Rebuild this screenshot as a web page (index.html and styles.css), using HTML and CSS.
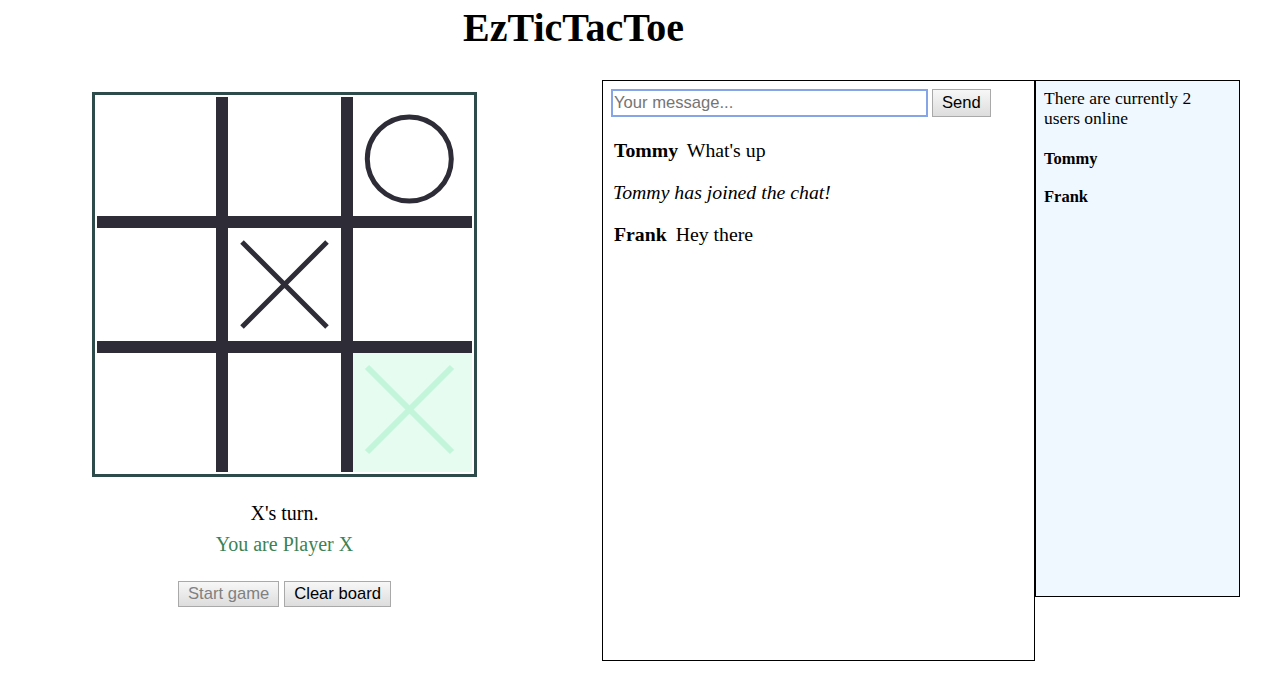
FILE: index.html
```html
<!DOCTYPE html>
<html>
<head>
<meta charset="utf-8">
<title>EzTicTacToe</title>
<link rel="stylesheet" href="styles.css">
</head>
<body>
<h1 class="title">EzTicTacToe</h1>
<div class="main">
  <div class="game">
    <div class="board">
      <div class="grid">
        <div class="cell"></div>
        <div class="cell"></div>
        <div class="cell">
          <svg width="119" height="119" viewBox="0 0 119 119"><circle cx="56.3" cy="62" r="42" fill="none" stroke="#2e2d37" stroke-width="5"/></svg>
        </div>
        <div class="cell"></div>
        <div class="cell">
          <svg width="113" height="113" viewBox="0 0 113 113"><path d="M14 14 L99 99 M99 14 L14 99" stroke="#2e2d37" stroke-width="5"/></svg>
        </div>
        <div class="cell"></div>
        <div class="cell"></div>
        <div class="cell"></div>
        <div class="cell hover">
          <svg width="119" height="119" viewBox="0 0 119 119"><path d="M14 14 L99 99 M99 14 L14 99" stroke="#c2f5da" stroke-width="6"/></svg>
        </div>
      </div>
    </div>
    <p class="turn">X's turn.</p>
    <p class="player">You are Player X</p>
    <div class="controls">
      <button class="btn" disabled>Start game</button>
      <button class="btn">Clear board</button>
    </div>
  </div>
  <div class="chat">
    <form class="chat-form">
      <input class="chat-input" type="text" placeholder="Your message...">
      <button class="btn" type="button">Send</button>
    </form>
    <div class="messages">
      <p class="msg"><b class="name">Tommy</b> What's up</p>
      <p class="msg info">Tommy has joined the chat!</p>
      <p class="msg"><b class="name">Frank</b> Hey there</p>
    </div>
  </div>
  <div class="users">
    <p class="users-count">There are currently 2 users online</p>
    <p class="user">Tommy</p>
    <p class="user">Frank</p>
  </div>
</div>
</body>
</html>
```
FILE: styles.css
```css
body {
  margin: 0 8px 8px;
  font-family: "Liberation Serif", "Times New Roman", serif;
  color: #000;
  background: #fff;
}

.title {
  margin: 6px 0 30px;
  padding-right: 118px;
  font-size: 40px;
  font-weight: bold;
  text-align: center;
  line-height: 44px;
}

.main {
  display: flex;
  align-items: flex-start;
}

.game {
  width: 553px;
  padding-top: 12px;
  text-align: center;
}

.board {
  display: inline-block;
  border: 3px solid #2e4b4b;
  padding: 2px;
  vertical-align: top;
}

.grid {
  display: grid;
  grid-template-columns: 119px 113px 119px;
  grid-template-rows: 119px 113px 119px;
  gap: 12px;
  background: #2e2d37;
}

.cell {
  background: #fff;
  overflow: hidden;
}

.cell svg {
  display: block;
}

.cell.hover {
  background: #e6fcf0;
}

.turn {
  margin: 25px 0 0;
  font-size: 20px;
  line-height: 23px;
}

.player {
  margin: 8px 0 0;
  font-size: 20px;
  line-height: 23px;
  color: #3b8256;
}

.controls {
  margin-top: 25px;
  display: flex;
  justify-content: center;
  gap: 5px;
}

.btn {
  height: 26px;
  padding: 0 9px;
  font-family: "Liberation Sans", Arial, sans-serif;
  font-size: 16.6px;
  color: #000;
  border: 1px solid #a9a9a9;
  border-radius: 0;
  background: linear-gradient(#f7f7f7, #dddddd);
}

.btn:disabled {
  color: #808080;
}

.chat {
  box-sizing: border-box;
  width: 433px;
  height: 581px;
  margin-left: 41px;
  border: 1px solid #000;
  padding: 8px;
}

.chat-form {
  display: flex;
  gap: 4px;
  margin: 0;
}

.chat-form .btn {
  height: 28px;
}

.chat-input {
  box-sizing: border-box;
  width: 317px;
  height: 28px;
  padding: 0 1px;
  border: 2px solid #84a5e8;
  outline: none;
  font-family: "Liberation Sans", Arial, sans-serif;
  font-size: 16.6px;
}

.chat-input::placeholder {
  color: #757575;
}

.messages {
  display: flex;
  flex-direction: column;
  gap: 19.5px;
  margin-top: 22px;
  padding-left: 3px;
}

.msg {
  margin: 0;
  font-size: 19.8px;
  line-height: 22.5px;
}

.msg .name {
  margin-right: 4px;
}

.msg.info {
  font-style: italic;
  margin-left: -1px;
}

.users {
  box-sizing: border-box;
  width: 205px;
  height: 517px;
  border: 1px solid #000;
  background: #f0f8ff;
  padding: 8px;
}

.users-count {
  margin: -1px 0 21px;
  font-size: 17.5px;
  line-height: 20px;
}

.user {
  margin: 0 0 19px;
  font-size: 16.5px;
  line-height: 19px;
  font-weight: bold;
}
```
